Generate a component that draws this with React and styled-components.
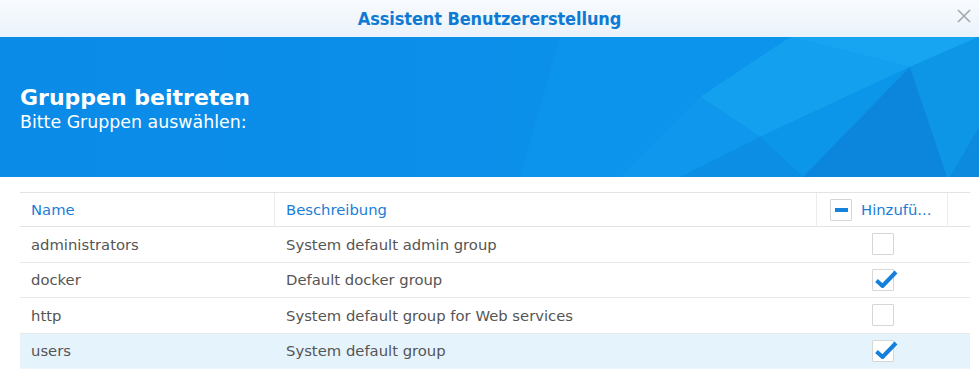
import React from "react";
import styled, { createGlobalStyle } from "styled-components";

const Global = createGlobalStyle`
  html, body {
    margin: 0;
    padding: 0;
    background: #ffffff;
  }
  body {
    font-family: "DejaVu Sans", Verdana, sans-serif;
    width: 979px;
    height: 388px;
    overflow: hidden;
  }
`;

const Window = styled.div`
  width: 979px;
  height: 388px;
  display: flex;
  flex-direction: column;
  background: #fff;
`;

const TitleBar = styled.div`
  height: 37px;
  display: flex;
  align-items: center;
  justify-content: center;
  position: relative;
  background: linear-gradient(to bottom, #f8fbfe 0%, #eaf2fa 100%);
`;

const Title = styled.span`
  font-family: "DejaVu Sans Condensed", "DejaVu Sans", sans-serif;
  font-weight: bold;
  font-size: 18px;
  color: #0f7ad4;
  letter-spacing: -0.1px;
`;

const Close = styled.button`
  position: absolute;
  right: 7px;
  top: 8px;
  width: 16px;
  height: 16px;
  padding: 0;
  border: none;
  background: none;
  display: flex;
  align-items: center;
  justify-content: center;
`;

const Banner = styled.div`
  height: 140px;
  position: relative;
  overflow: hidden;
  background: linear-gradient(to right, #0a8be8 0%, #0b90ea 60%, #0b92ec 100%);
  display: flex;
  flex-direction: column;
  padding: 48px 20px 0;
  box-sizing: border-box;
`;

const Facets = styled.svg`
  position: absolute;
  inset: 0;
  width: 100%;
  height: 100%;
`;

const Heading = styled.h1`
  position: relative;
  margin: 0;
  color: #fff;
  font-size: 22px;
  font-weight: bold;
  line-height: 26px;
`;

const Sub = styled.p`
  position: relative;
  margin: 1px 0 0;
  color: #fff;
  font-size: 17.4px;
  line-height: 21px;
`;

const Content = styled.div`
  padding: 15px 9px 0 20px;
`;

const Grid = styled.div`
  display: grid;
  grid-template-columns: 255px 542px 131px 22px;
  border-top: 1px solid #e3e3e3;
`;

const HeadCell = styled.div`
  height: 33px;
  display: flex;
  align-items: center;
  gap: 9px;
  padding-left: ${(p) => (p.$check ? "13px" : "11px")};
  border-bottom: 1px solid #e3e3e3;
  border-right: ${(p) => (p.$last ? "none" : "1px solid #ececec")};
  color: #1c7dd6;
  font-size: 14.8px;
  white-space: nowrap;
  overflow: hidden;
`;

const Row = styled.div`
  display: contents;
`;

const Cell = styled.div`
  height: 34.5px;
  display: flex;
  align-items: center;
  justify-content: ${(p) => (p.$center ? "center" : "flex-start")};
  padding-left: ${(p) => (p.$center ? "0" : "11px")};
  border-bottom: 1px solid ${(p) => (p.$selected ? "#eef6fd" : "#e8e8e8")};
  background: ${(p) => (p.$selected ? "#e5f3fd" : "#fff")};
  color: #555;
  font-size: 14.8px;
  white-space: nowrap;
`;

const Box = styled.span`
  position: relative;
  width: 20px;
  height: 20px;
  border: 1px solid #d6d6d6;
  border-radius: 1px;
  background: #fff;
  display: inline-block;
  flex-shrink: 0;
`;

const Mark = styled.svg`
  position: absolute;
  left: 2px;
  top: -1px;
`;

const Minus = styled.span`
  position: absolute;
  left: 4px;
  top: 8px;
  width: 13px;
  height: 4px;
  background: #1483dd;
`;

function Check({ checked }) {
  return (
    <Box>
      {checked && (
        <Mark width="23" height="20" viewBox="0 0 23 20">
          <path d="M1.5 11.5 L7.5 17 L21 3" fill="none" stroke="#1580dc" strokeWidth="4" strokeLinejoin="round" />
        </Mark>
      )}
    </Box>
  );
}

const groups = [
  { name: "administrators", desc: "System default admin group", on: false },
  { name: "docker", desc: "Default docker group", on: true },
  { name: "http", desc: "System default group for Web services", on: false },
  { name: "users", desc: "System default group", on: true, selected: true },
];

export default function App() {
  return (
    <Window>
      <Global />
      <TitleBar>
        <Title>Assistent Benutzererstellung</Title>
        <Close>
          <svg width="14" height="14" viewBox="0 0 14 14">
            <path d="M1 1 L13 13 M13 1 L1 13" stroke="#a3a8ad" strokeWidth="1.6" />
          </svg>
        </Close>
      </TitleBar>
      <Banner>
        <Facets viewBox="0 0 979 140" preserveAspectRatio="none">
          <polygon points="560,0 979,0 979,140 520,140" fill="#0c93eb" />
          <polygon points="790,0 979,0 910,30" fill="#17a4f0" />
          <polygon points="790,0 910,30 760,100 700,60" fill="#12a0ef" />
          <polygon points="700,60 760,100 680,140 620,140" fill="#0e97ed" />
          <polygon points="910,30 760,100 803,140" fill="#0c96ea" />
          <polygon points="760,100 803,140 680,140" fill="#0b8ee4" />
          <polygon points="910,30 803,140 947,140" fill="#0b86dc" />
          <polygon points="910,30 979,0 979,140 947,140" fill="#0d95e6" />
          <polygon points="979,90 979,140 950,140" fill="#0b8ade" />
        </Facets>
        <Heading>Gruppen beitreten</Heading>
        <Sub>Bitte Gruppen auswählen:</Sub>
      </Banner>
      <Content>
        <Grid>
          <HeadCell>Name</HeadCell>
          <HeadCell>Beschreibung</HeadCell>
          <HeadCell $check>
            <Box>
              <Minus />
            </Box>
            Hinzufü...
          </HeadCell>
          <HeadCell $last />
          {groups.map((g) => (
            <Row key={g.name}>
              <Cell $selected={g.selected}>{g.name}</Cell>
              <Cell $selected={g.selected}>{g.desc}</Cell>
              <Cell $selected={g.selected} $center>
                <Check checked={g.on} />
              </Cell>
              <Cell $selected={g.selected} />
            </Row>
          ))}
        </Grid>
      </Content>
    </Window>
  );
}
